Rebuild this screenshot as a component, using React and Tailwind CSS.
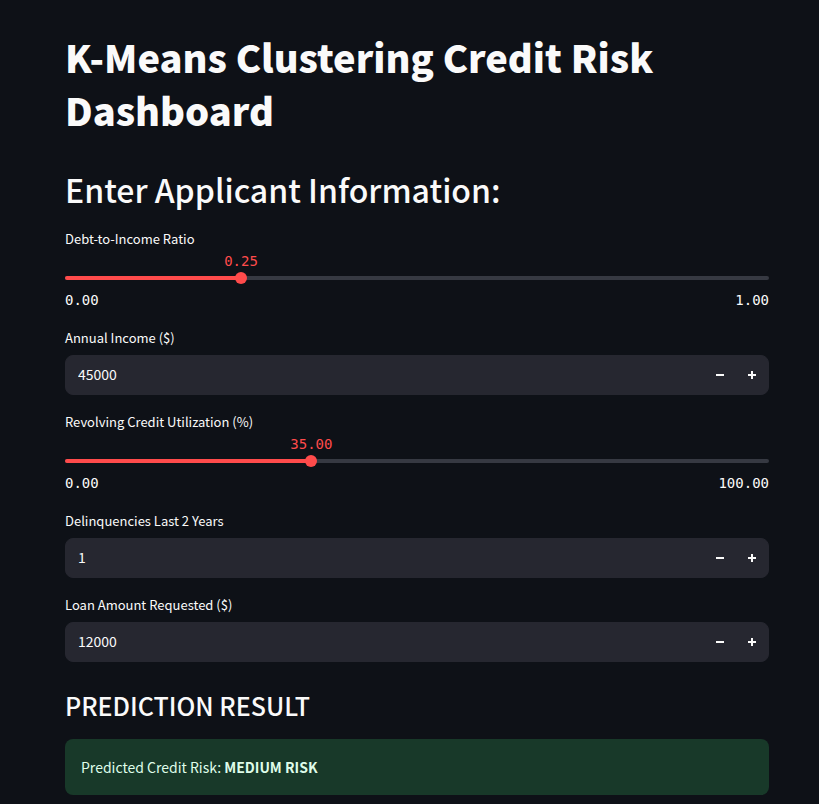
import { useId, useState } from "react";

function Slider({ label, min, max, step, initial }) {
  const id = useId();
  const [value, setValue] = useState(initial);
  const percent = ((value - min) / (max - min)) * 100;

  return (
    <div>
      <label htmlFor={id} className="block pb-0.5 text-[13px] leading-[22px]">
        {label}
      </label>
      <div className="relative h-5 font-['DejaVu_Sans_Mono',monospace] text-sm leading-[18px] text-[#ff4b4b]">
        <output
          htmlFor={id}
          className="absolute top-0 -translate-x-1/2"
          style={{ left: `${percent}%` }}
        >
          {value.toFixed(2)}
        </output>
      </div>
      <div className="relative flex h-3 items-center">
        <div className="h-1 w-full overflow-hidden rounded-full bg-[#363942]">
          <div className="h-full bg-[#ff4b4b]" style={{ width: `${percent}%` }} />
        </div>
        <input
          id={id}
          type="range"
          min={min}
          max={max}
          step={step}
          value={value}
          onChange={(e) => setValue(Number(e.target.value))}
          className="absolute -inset-x-1.5 top-0 m-0 h-3 w-[calc(100%+12px)] cursor-pointer appearance-none bg-transparent [&::-webkit-slider-thumb]:size-3 [&::-webkit-slider-thumb]:appearance-none [&::-webkit-slider-thumb]:rounded-full [&::-webkit-slider-thumb]:bg-[#ff4b4b]"
        />
      </div>
      <div className="flex justify-between pt-1.5 pb-px font-['DejaVu_Sans_Mono',monospace] text-sm leading-5">
        <span>{min.toFixed(2)}</span>
        <span>{max.toFixed(2)}</span>
      </div>
    </div>
  );
}

function StepButton({ label, path, onClick }) {
  return (
    <button
      type="button"
      aria-label={label}
      onClick={onClick}
      className="flex w-8 items-center justify-center self-stretch"
    >
      <svg viewBox="0 0 8 8" className="size-2 fill-current">
        <path d={path} />
      </svg>
    </button>
  );
}

function NumberField({ label, initial, step }) {
  const id = useId();
  const [value, setValue] = useState(initial);

  return (
    <div>
      <label htmlFor={id} className="block pb-1.5 text-[13px] leading-[22px]">
        {label}
      </label>
      <div className="flex h-10 items-center overflow-hidden rounded-lg border border-[#262730] bg-[#262730]">
        <input
          id={id}
          type="number"
          value={value}
          onChange={(e) => setValue(Number(e.target.value))}
          className="min-w-0 flex-1 bg-transparent px-3 pb-0.5 text-[14px] leading-6 outline-none [appearance:textfield] [&::-webkit-inner-spin-button]:appearance-none"
        />
        <StepButton
          label={`Decrease ${label}`}
          path="M0 3v2h8V3z"
          onClick={() => setValue(value - step)}
        />
        <StepButton
          label={`Increase ${label}`}
          path="M3 0v3H0v2h3v3h2V5h3V3H5V0z"
          onClick={() => setValue(value + step)}
        />
      </div>
    </div>
  );
}

export default function App() {
  return (
    <main className="min-h-screen bg-[#0e1117] pt-[30px] pr-[50px] pb-2 pl-[65px] font-['Noto_Sans_CJK_JP','Noto_Sans_CJK_SC',sans-serif] text-[#fafafa]">
      <h1 className="text-[38px] leading-[53px] font-black">
        K-Means Clustering Credit Risk Dashboard
      </h1>
      <h2 className="pt-8 text-[32px] leading-[43px] font-medium">
        Enter Applicant Information:
      </h2>
      <form className="flex flex-col gap-4 pt-[17px]" onSubmit={(e) => e.preventDefault()}>
        <Slider label="Debt-to-Income Ratio" min={0} max={1} step={0.01} initial={0.25} />
        <NumberField label="Annual Income ($)" initial={45000} step={1000} />
        <Slider label="Revolving Credit Utilization (%)" min={0} max={100} step={0.5} initial={35} />
        <NumberField label="Delinquencies Last 2 Years" initial={1} step={1} />
        <NumberField label="Loan Amount Requested ($)" initial={12000} step={500} />
      </form>
      <h3 className="pt-[26px] text-[25px] leading-[34px] font-medium">PREDICTION RESULT</h3>
      <div
        role="status"
        className="mt-[17px] rounded-lg bg-[#183929] p-4 text-[14px] leading-6 text-[#dffde9]"
      >
        Predicted Credit Risk: <strong className="font-bold">MEDIUM RISK</strong>
      </div>
    </main>
  );
}
